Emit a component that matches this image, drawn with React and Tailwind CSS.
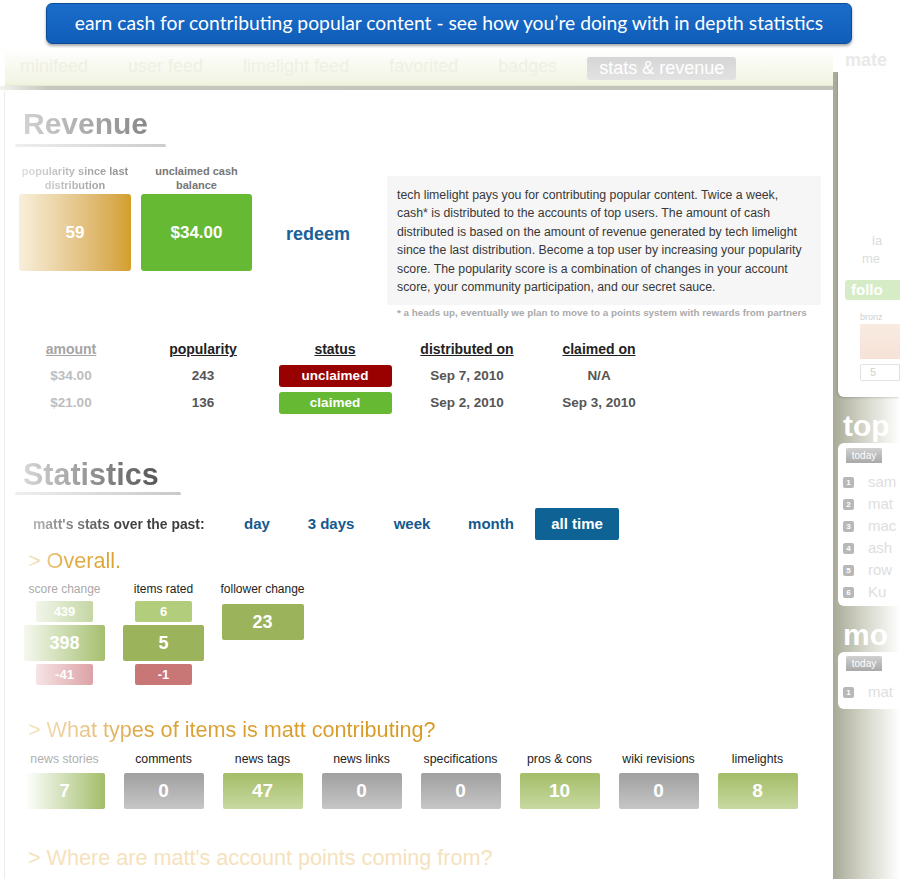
import React from 'react'

const tabs = ['minifeed', 'user feed', 'limelight feed', 'favorited', 'badges']

const payouts = [
  { amount: '$34.00', popularity: 243, claimed: false, distributed: 'Sep 7, 2010', claimedOn: 'N/A' },
  { amount: '$21.00', popularity: 136, claimed: true, distributed: 'Sep 2, 2010', claimedOn: 'Sep 3, 2010' },
]

const periods = [
  { label: 'day', w: 'w-[60px]' },
  { label: '3 days', w: 'w-[88px]' },
  { label: 'week', w: 'w-[74px]' },
  { label: 'month', w: 'w-[84px]' },
]

const items = [
  { label: 'news stories', value: 7, kind: 'fade' },
  { label: 'comments', value: 0, kind: 'gray' },
  { label: 'news tags', value: 47, kind: 'green' },
  { label: 'news links', value: 0, kind: 'gray' },
  { label: 'specifications', value: 0, kind: 'gray' },
  { label: 'pros & cons', value: 10, kind: 'green' },
  { label: 'wiki revisions', value: 0, kind: 'gray' },
  { label: 'limelights', value: 8, kind: 'green' },
]

const itemBox = {
  fade: 'bg-linear-to-r from-white to-[#a3bd69]',
  gray: 'bg-linear-to-b from-[#a0a0a0] to-[#c6c6c6]',
  green: 'bg-linear-to-b from-[#a4bd68] to-[#c8d9a0]',
}

const topUsers = ['sam', 'mat', 'mac', 'ash', 'row', 'Ku']

export default function App() {
  return (
    <div className="w-[900px] h-[879px] overflow-hidden bg-white flex flex-col font-['Liberation_Sans',Arial,sans-serif]">
      {/* Banner */}
      <div className="h-[48px] shrink-0 pt-[3px]">
        <div className="ml-[46px] w-[806px] h-[41px] rounded-[6px] border border-[#0b4c9a] bg-linear-to-b from-[#1b6dca] to-[#0f5db9] shadow-[0_2px_3px_rgba(0,0,0,0.35)] flex items-center justify-center">
          <span className="text-white text-[19.3px] font-['Lato',sans-serif]">
            earn cash for contributing popular content - see how you’re doing with in depth statistics
          </span>
        </div>
      </div>

      <div className="flex flex-1">
        {/* Main column */}
        <div className="w-[833px] flex flex-col">
          {/* Tabs */}
          <div className="ml-[5px] h-[38px] bg-linear-to-b from-white to-[#f1f3e1] border-b border-[#e6e9d2] flex items-center pl-[15px] gap-[40px]">
            {tabs.map((t) => (
              <span key={t} className="text-[18px] text-[#eef0e3]">{t}</span>
            ))}
            <span className="-ml-[10px] self-end mb-[5px] h-[23px] px-[12px] rounded-[3px] bg-linear-to-b from-[#d6d6d6] to-[#e2e2e2] text-white text-[18px] leading-[23px]">
              stats &amp; revenue
            </span>
          </div>
          <div className="h-[4px] bg-linear-to-r from-[#f2f2ef] via-[#c6c6be] via-[6%] to-[#c4c4bc]" />

          {/* Panel */}
          <div className="flex-1 ml-[4px] bg-white border-l border-[#ebebeb] rounded-tl-[4px] flex flex-col">
            {/* Revenue */}
            <div className="mt-[17px] pl-[18px] h-[34px]">
              <h1 className="inline-block text-[30px] leading-[34px] font-bold bg-linear-to-r from-[#d2d2d2] to-[#888] bg-clip-text text-transparent">Revenue</h1>
            </div>
            <div className="mt-[3px] ml-[10px] w-[151px] h-[3px] rounded-full bg-linear-to-r from-[#efefef] to-[#cdcdcd]" />

            <div className="mt-[17px] flex items-start">
              <div className="ml-[14px] w-[112px] flex flex-col items-center">
                <div className="h-[28px] text-[11px] leading-[14px] font-bold text-center bg-linear-to-r from-[#dedede] to-[#8c8c8c] bg-clip-text text-transparent">
                  popularity since last<br />distribution
                </div>
                <div className="mt-[2px] w-full h-[77px] rounded-[3px] bg-linear-to-r from-[#f8efdb] to-[#d39f2a] flex items-center justify-center text-white text-[17px] font-bold">
                  59
                </div>
              </div>
              <div className="ml-[10px] w-[111px] flex flex-col items-center">
                <div className="h-[28px] text-[11px] leading-[14px] font-bold text-center text-[#777]">
                  unclaimed cash<br />balance
                </div>
                <div className="mt-[2px] w-full h-[77px] rounded-[3px] bg-[#65b933] flex items-center justify-center text-white text-[17px] font-bold">
                  $34.00
                </div>
              </div>
              <div className="ml-[34px] w-[101px] mt-[60px] text-[18px] leading-[20px] font-bold text-[#1b6199]">redeem</div>
              <div className="w-[434px] mt-[12px]">
                <div className="bg-[#f6f6f6] px-[10px] pt-[10px] pb-[9px] text-[12.3px] leading-[18.4px] text-[#383838]">
                  tech limelight pays you for contributing popular content. Twice a week,<br />
                  cash* is distributed to the accounts of top users. The amount of cash<br />
                  distributed is based on the amount of revenue generated by tech limelight<br />
                  since the last distribution. Become a top user by increasing your popularity<br />
                  score. The popularity score is a combination of changes in your account<br />
                  score, your community participation, and our secret sauce.
                </div>
                <div className="mt-[2px] pl-[10px] text-[9.85px] leading-[12px] font-bold text-[#aaa]">
                  * a heads up, eventually we plan to move to a points system with rewards from partners
                </div>
              </div>
            </div>

            {/* Payout table */}
            <div className="mt-[22px] grid grid-cols-[repeat(5,132px)] text-center font-bold">
              <div className="h-[16px] text-[14px] leading-[16px] underline text-[#a5a5a5]">amount</div>
              <div className="h-[16px] text-[14px] leading-[16px] underline text-[#222]">popularity</div>
              <div className="h-[16px] text-[14px] leading-[16px] underline text-[#222]">status</div>
              <div className="h-[16px] text-[14px] leading-[16px] underline text-[#222]">distributed on</div>
              <div className="h-[16px] text-[14px] leading-[16px] underline text-[#222]">claimed on</div>
              {payouts.map((p, i) => (
                <React.Fragment key={p.distributed}>
                  <div className={`${i === 0 ? 'mt-[8px]' : 'mt-[5px]'} h-[22px] leading-[22px] text-[13.5px] text-[#bdbdbd]`}>{p.amount}</div>
                  <div className={`${i === 0 ? 'mt-[8px]' : 'mt-[5px]'} h-[22px] leading-[22px] text-[13.5px] text-[#555]`}>{p.popularity}</div>
                  <div className={`${i === 0 ? 'mt-[8px]' : 'mt-[5px]'} h-[22px] flex justify-center`}>
                    <span className={`w-[113px] h-[22px] leading-[22px] rounded-[3px] text-white text-[13.5px] ${p.claimed ? 'bg-[#66ba33]' : 'bg-[#990100]'}`}>
                      {p.claimed ? 'claimed' : 'unclaimed'}
                    </span>
                  </div>
                  <div className={`${i === 0 ? 'mt-[8px]' : 'mt-[5px]'} h-[22px] leading-[22px] text-[13.5px] text-[#555]`}>{p.distributed}</div>
                  <div className={`${i === 0 ? 'mt-[8px]' : 'mt-[5px]'} h-[22px] leading-[22px] text-[13.5px] text-[#555]`}>{p.claimedOn}</div>
                </React.Fragment>
              ))}
            </div>

            {/* Statistics */}
            <div className="mt-[43px] pl-[18px] h-[34px]">
              <h1 className="inline-block text-[30.5px] leading-[34px] font-bold bg-linear-to-r from-[#d8d8d8] to-[#555] bg-clip-text text-transparent">Statistics</h1>
            </div>
            <div className="mt-[1px] ml-[10px] w-[166px] h-[3px] rounded-full bg-linear-to-r from-[#eeeeee] to-[#c9c9c9]" />

            <div className="mt-[13px] h-[32px] flex items-center">
              <span className="ml-[28px] w-[194px] text-[13.9px] font-bold bg-linear-to-r from-[#b5b5b5] via-[#444] via-[45%] to-[#333] bg-clip-text text-transparent">
                matt's stats over the past:
              </span>
              {periods.map((p) => (
                <span key={p.label} className={`${p.w} text-center text-[15px] font-bold text-[#15598d]`}>{p.label}</span>
              ))}
              <span className="ml-[2px] w-[84px] h-[32px] leading-[32px] rounded-[2px] bg-[#0f6294] text-center text-[15px] font-bold text-white">
                all time
              </span>
            </div>

            <div className="mt-[9px] h-[24px] pl-[23px]">
              <h2 className="inline-block text-[21.6px] leading-[24px] bg-linear-to-r from-[#f5e6c4] via-[#e2ad45] via-[40%] to-[#dca032] bg-clip-text text-transparent">
                &gt; Overall.
              </h2>
            </div>

            <div className="mt-[9px] ml-[10px] flex">
              <div className="w-[99px] flex flex-col items-center">
                <div className="h-[14px] text-[12px] leading-[14px] text-[#aaa]">score change</div>
                <div className="mt-[5px] w-[57px] h-[21px] rounded-[2px] bg-linear-to-r from-[#f1f6ea] to-[#c5d6a4] text-white text-[13px] font-bold leading-[21px] text-center">439</div>
                <div className="mt-[3px] w-[81px] h-[36px] rounded-[2px] bg-linear-to-r from-[#f5f8ef] to-[#a6bf6e] text-white text-[18px] font-bold leading-[36px] text-center">398</div>
                <div className="mt-[3px] w-[57px] h-[21px] rounded-[2px] bg-linear-to-r from-[#f6e4e6] to-[#dba2a6] text-white text-[13px] font-bold leading-[21px] text-center">-41</div>
              </div>
              <div className="w-[99px] flex flex-col items-center">
                <div className="h-[14px] text-[12px] leading-[14px] text-[#222]">items rated</div>
                <div className="mt-[5px] w-[57px] h-[21px] rounded-[2px] bg-[#b2cd7b] text-white text-[13px] font-bold leading-[21px] text-center">6</div>
                <div className="mt-[3px] w-[81px] h-[36px] rounded-[2px] bg-[#9bb35b] text-white text-[18px] font-bold leading-[36px] text-center">5</div>
                <div className="mt-[3px] w-[57px] h-[21px] rounded-[2px] bg-[#c97676] text-white text-[13px] font-bold leading-[21px] text-center">-1</div>
              </div>
              <div className="w-[99px] flex flex-col items-center">
                <div className="h-[14px] text-[12px] leading-[14px] text-[#222]">follower change</div>
                <div className="mt-[8px] w-[82px] h-[36px] rounded-[2px] bg-[#9bb35b] text-white text-[18px] font-bold leading-[36px] text-center">23</div>
              </div>
            </div>

            <div className="mt-[33px] h-[24px] pl-[23px]">
              <h2 className="inline-block text-[21.6px] leading-[24px] bg-linear-to-r from-[#f4e3bf] via-[#dba238] via-[30%] to-[#d8981f] bg-clip-text text-transparent">
                &gt; What types of items is matt contributing?
              </h2>
            </div>

            <div className="mt-[10px] ml-[10px] flex">
              {items.map((it) => (
                <div key={it.label} className="w-[99px] flex flex-col items-center">
                  <div className={`h-[14px] text-[12.3px] leading-[14px] ${it.kind === 'fade' ? 'text-[#b0b0b0]' : 'text-[#222]'}`}>{it.label}</div>
                  <div className={`mt-[7px] w-[80px] h-[36px] rounded-[2px] ${itemBox[it.kind]} text-white text-[19px] font-bold leading-[36px] text-center`}>
                    {it.value}
                  </div>
                </div>
              ))}
            </div>

            <div className="mt-[37px] h-[24px] pl-[23px]">
              <h2 className="text-[21.6px] leading-[24px] text-[#f5e2bd]">&gt; Where are matt's account points coming from?</h2>
            </div>
          </div>
        </div>

        {/* Right column */}
        <div className="w-[67px] flex flex-col">
          <div className="h-[24px] pl-[12px] text-[18px] leading-[24px] font-bold text-[#e9e9e9] whitespace-nowrap">mate</div>
          <div className="flex-1 bg-linear-to-r from-[#a8aa97] via-[#d3d4c8] via-[45%] to-white flex flex-col">
            <div className="ml-[5px] h-[325px] bg-white rounded-bl-[6px] shadow-[-1px_1px_2px_rgba(0,0,0,0.15)] whitespace-nowrap flex flex-col">
              <div className="mt-[160px] pl-[34px] text-[13px] leading-[18px] text-[#dcdcdc]">la</div>
              <div className="pl-[24px] text-[13px] leading-[18px] text-[#dcdcdc]">me</div>
              <div className="mt-[12px] ml-[7px] h-[20px] rounded-l-[3px] bg-[#d6ecc7] pl-[6px] text-[15px] leading-[20px] font-bold text-white">follo</div>
              <div className="mt-[12px] pl-[22px] text-[9px] leading-[10px] text-[#cfcfcf]">bronz</div>
              <div className="mt-[2px] ml-[22px] h-[35px] bg-linear-to-b from-[#f9ebe2] to-[#f6e2d6]" />
              <div className="mt-[5px] ml-[22px] h-[17px] border border-[#e2e2e2] rounded-l-[2px] pl-[9px] text-[11px] leading-[15px] text-[#cfcfcf]">5</div>
            </div>

            <div className="mt-[12px] h-[34px] pl-[10px] text-[30px] leading-[34px] font-bold text-white whitespace-nowrap">top</div>
            <div className="ml-[5px] h-[163px] bg-white rounded-l-[6px] whitespace-nowrap">
              <div className="mt-[5px] ml-[8px] w-[36px] h-[15px] rounded-t-[2px] bg-linear-to-b from-[#d0d0d0] to-[#a9a9a9] text-white text-[10px] leading-[15px] text-center">today</div>
              <div className="mt-[8px] flex flex-col">
                {topUsers.map((u, i) => (
                  <div key={u} className="h-[22px] flex items-center pl-[5px]">
                    <span className="w-[11px] h-[11px] rounded-[2px] bg-[#b8b8b8] text-white text-[8px] leading-[11px] text-center font-bold">{i + 1}</span>
                    <span className="ml-[14px] text-[15px] text-[#dedede]">{u}</span>
                  </div>
                ))}
              </div>
            </div>

            <div className="mt-[12px] h-[34px] pl-[10px] text-[30px] leading-[34px] font-bold text-white whitespace-nowrap">mo</div>
            <div className="ml-[5px] h-[57px] bg-white rounded-l-[6px] whitespace-nowrap">
              <div className="mt-[4px] ml-[8px] w-[36px] h-[15px] rounded-t-[2px] bg-linear-to-b from-[#d0d0d0] to-[#a9a9a9] text-white text-[10px] leading-[15px] text-center">today</div>
              <div className="mt-[10px] h-[22px] flex items-center pl-[5px]">
                <span className="w-[11px] h-[11px] rounded-[2px] bg-[#b8b8b8] text-white text-[8px] leading-[11px] text-center font-bold">1</span>
                <span className="ml-[14px] text-[15px] text-[#dedede]">mat</span>
              </div>
            </div>
          </div>
        </div>
      </div>
    </div>
  )
}
